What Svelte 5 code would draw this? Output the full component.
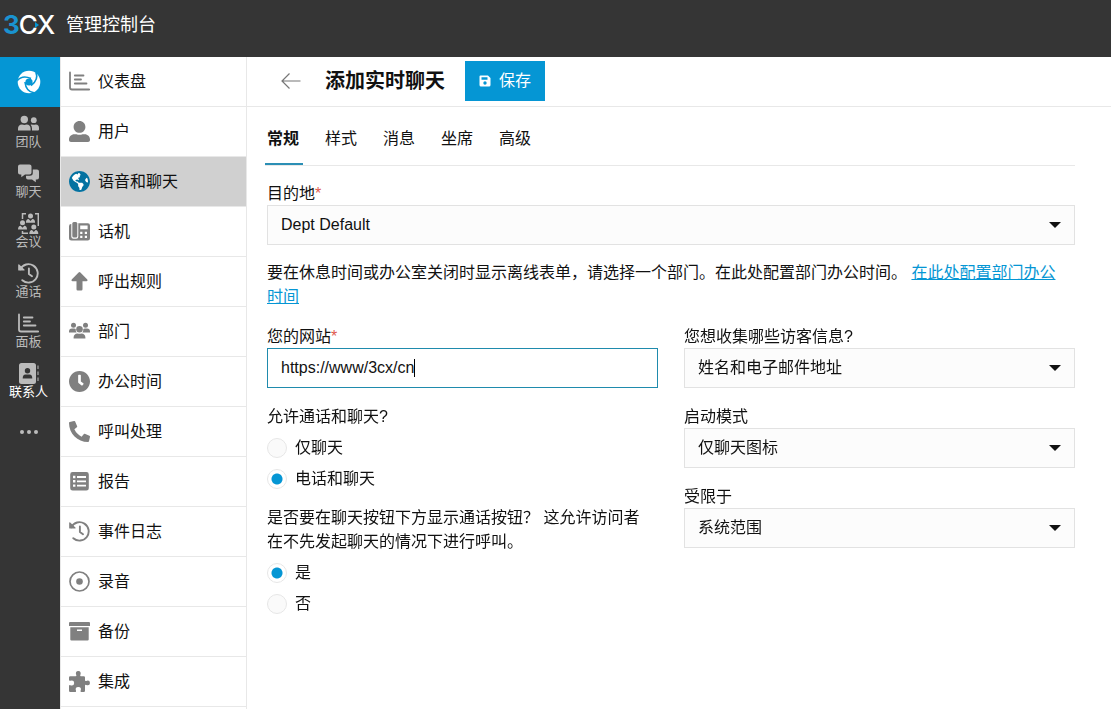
<script lang="ts">
  const rail = [
    { label: '团队', icon: 'team' },
    { label: '聊天', icon: 'chat' },
    { label: '会议', icon: 'meeting' },
    { label: '通话', icon: 'history' },
    { label: '面板', icon: 'chart' },
    { label: '联系人', icon: 'contacts', current: true }
  ];

  const menu = [
    { label: '仪表盘', icon: 'chart' },
    { label: '用户', icon: 'user' },
    { label: '语音和聊天', icon: 'globe', current: true },
    { label: '话机', icon: 'phones' },
    { label: '呼出规则', icon: 'arrowUp' },
    { label: '部门', icon: 'group' },
    { label: '办公时间', icon: 'clock' },
    { label: '呼叫处理', icon: 'phone' },
    { label: '报告', icon: 'report' },
    { label: '事件日志', icon: 'history' },
    { label: '录音', icon: 'record' },
    { label: '备份', icon: 'archive' },
    { label: '集成', icon: 'puzzle' }
  ];

  const tabs = ['常规', '样式', '消息', '坐席', '高级'];
  let activeTab = $state('常规');
  let website = $state('https://www/3cx/cn');
  let channel = $state('both');
  let callButton = $state('yes');

  function focusOnMount(node: HTMLInputElement) {
    node.focus();
    node.setSelectionRange(node.value.length, node.value.length);
  }
</script>

{#snippet icon(name: string)}
  {#if name === 'chart'}
    <svg class="icon" viewBox="0 0 21 21" fill="none" stroke="currentColor" stroke-width="1.8" stroke-linecap="round" stroke-linejoin="round">
      <path d="M1 1.500V16.500q0 2 2 2H20.200M5.800 4.500H14.500M5.800 8.500H12M5.800 12.500H17.500" />
    </svg>
  {:else if name === 'user'}
    <svg class="icon" viewBox="0 0 512 512" fill="currentColor">
      <path d="M256 288c79.500 0 144-64.500 144-144S335.500 0 256 0 112 64.500 112 144s64.500 144 144 144zm128 32h-55.100c-22.200 10.200-46.900 16-72.900 16s-50.600-5.800-72.900-16H128C57.300 320 0 377.300 0 448v16c0 26.500 21.500 48 48 48h416c26.500 0 48-21.500 48-48v-16c0-70.700-57.300-128-128-128z" />
    </svg>
  {:else if name === 'globe'}
    <svg class="icon" viewBox="0 8 496 496" fill="currentColor">
      <circle cx="248" cy="256" r="240" fill="#fff" />
      <path d="M248 8C111.030 8 0 119.030 0 256s111.030 248 248 248 248-111.030 248-248S384.970 8 248 8zm82.290 357.600c-3.900 3.880-7.990 7.950-11.310 11.280-2.990 3-5.100 6.700-6.170 10.710-1.510 5.660-2.730 11.380-4.770 16.870l-17.390 46.850c-13.760 3-28 4.690-42.650 4.690v-27.380c1.690-12.620-7.640-36.260-22.630-51.250-6-6-9.370-14.140-9.370-22.630v-32.010c0-11.640-6.270-22.340-16.460-27.970-14.370-7.950-34.810-19.060-48.810-26.110-11.480-5.780-22.100-13.140-31.650-21.750l-.8-.72a114.792 114.792 0 0 1-18.060-20.740c-9.380-13.770-24.660-36.420-34.590-51.140 20.470-45.500 57.360-82.040 103.200-101.890l24.010 12.010C203.480 89.740 216 82.010 216 70.110v-11.300c7.990-1.290 16.120-2.110 24.390-2.420l28.300 28.300c6.250 6.250 6.250 16.380 0 22.630L264 112l-10.340 10.340c-3.120 3.120-3.120 8.190 0 11.310l4.690 4.690c3.120 3.120 3.120 8.190 0 11.310l-8 8a8.008 8.008 0 0 1-5.660 2.340h-8.990c-2.080 0-4.080.81-5.580 2.270l-9.920 9.650a8.008 8.008 0 0 0-1.580 9.310l15.590 31.190c2.660 5.320-1.210 11.580-7.150 11.580h-5.640c-1.930 0-3.790-.7-5.240-1.960l-9.280-8.060a16.017 16.017 0 0 0-15.550-3.100l-31.170 10.390a11.950 11.950 0 0 0-8.170 11.340c0 4.530 2.560 8.660 6.610 10.690l11.080 5.540c9.410 4.710 19.790 7.160 30.310 7.160s22.590 27.290 32 32h66.750c8.490 0 16.620 3.370 22.630 9.370l13.690 13.690a30.503 30.503 0 0 1 8.930 21.570 46.536 46.536 0 0 1-13.720 32.980zM417 274.250c-5.790-1.450-10.840-5-14.150-9.970l-17.980-26.970a23.970 23.970 0 0 1 0-26.620l19.590-29.380c2.320-3.470 5.500-6.290 9.240-8.150l12.980-6.490C440.200 193.590 448 223.870 448 256c0 8.670-.74 17.160-1.820 25.540L417 274.250z" />
    </svg>
  {:else if name === 'phones'}
    <svg class="icon" viewBox="0 0 21 21" fill="currentColor" fill-rule="evenodd">
      <rect x="3.300" y="1" width="5" height="15.500" rx="1.500" />
      <path d="M2.300 3A2.200 2.200 0 0 0 0 5.200V17a2.500 2.500 0 0 0 2.500 2.500H18.800A2.200 2.200 0 0 0 21 17.300V4.500A2.200 2.200 0 0 0 18.800 2.300H9.300V15.500A2.200 2.200 0 0 1 7.100 17.700H4.500A2.200 2.200 0 0 1 2.300 15.500ZM11.200 4.500H18.600V8.300H11.200ZM11.200 10.700H13.400V12.900H11.200ZM15.800 10.700H18V12.900H15.800ZM11.200 14.800H13.400V17H11.200ZM15.800 14.800H18V17H15.800Z" />
    </svg>
  {:else if name === 'arrowUp'}
    <svg class="icon" viewBox="0 0 21 21" fill="currentColor">
      <path d="M9.600 1.500Q10.500.7 11.400 1.500L18.300 8.400Q19.200 10 17.500 10.200H13.500V18.300Q13.500 19.500 12.300 19.500H8.700Q7.500 19.500 7.500 18.300V10.200H3.500Q1.800 10 2.700 8.400Z" />
    </svg>
  {:else if name === 'group'}
    <svg class="icon" viewBox="0 0 21 21" fill="currentColor">
      <circle cx="4.500" cy="4.200" r="2.500" /><circle cx="16.500" cy="4.200" r="2.500" /><circle cx="10.500" cy="8.300" r="3.300" />
      <path d="M0 11.500V10.500A3 3 0 0 1 3 7.500H5.200Q6.200 7.500 6.700 8 6.500 10 7.600 11.500ZM21 11.500V10.500A3 3 0 0 0 18 7.500H15.800Q14.800 7.500 14.300 8 14.500 10 13.400 11.500ZM4.600 17.500V16.500A4.200 4.200 0 0 1 8.500 12.500Q10.500 13.200 12.500 12.500A4.200 4.200 0 0 1 16.400 16.500V17.500Z" />
    </svg>
  {:else if name === 'clock'}
    <svg class="icon" viewBox="8 8 496 496" fill="currentColor">
      <path d="M256,8C119,8,8,119,8,256S119,504,256,504,504,393,504,256,393,8,256,8Zm92.490,313h0l-20,25a16,16,0,0,1-22.490,2.500h0l-67-49.720a40,40,0,0,1-15-31.230V112a16,16,0,0,1,16-16h32a16,16,0,0,1,16,16V256l58,42.500A16,16,0,0,1,348.490,321Z" />
    </svg>
  {:else if name === 'phone'}
    <svg class="icon" viewBox="0 0 512 512" fill="currentColor">
      <path d="M497.390 361.800l-112-48a24 24 0 0 0-28 6.900l-49.600 60.600A370.660 370.660 0 0 1 130.600 204.110l60.600-49.600a23.940 23.940 0 0 0 6.900-28l-48-112A24.160 24.160 0 0 0 122.600.61l-104 24A24 24 0 0 0 0 48c0 256.500 207.900 464 464 464a24 24 0 0 0 23.400-18.600l24-104a24.290 24.290 0 0 0-14.010-27.600z" />
    </svg>
  {:else if name === 'report'}
    <svg class="icon" viewBox="0 0 21 21" fill="currentColor" fill-rule="evenodd">
      <path d="M3.600 1H17.400A2.400 2.400 0 0 1 19.800 3.400V17.200A2.400 2.400 0 0 1 17.400 19.600H3.600A2.400 2.400 0 0 1 1.200 17.200V3.400A2.400 2.400 0 0 1 3.600 1ZM4 4.800V7.200H6.400V4.800ZM8 5.100V6.900H17V5.100ZM4 9.100V11.500H6.400V9.100ZM8 9.400V11.200H17V9.400ZM4 13.400V15.800H6.400V13.400ZM8 13.700V15.500H17V13.700Z" />
    </svg>
  {:else if name === 'history'}
    <svg class="icon" viewBox="0 0 21 21" fill="none" stroke="currentColor" stroke-width="1.900" stroke-linecap="round" stroke-linejoin="round">
      <path d="M2.300 6.200A9.200 9.200 0 1 1 4.300 17.200M10.900 5.500V11L14 13.300" />
      <path d="M.8 1.800V7H6Z" fill="currentColor" stroke-width="1.200" />
    </svg>
  {:else if name === 'record'}
    <svg class="icon" viewBox="0 0 21 21" fill="none" stroke="currentColor" stroke-width="1.700">
      <circle cx="10.500" cy="10.500" r="9.500" /><circle cx="10.500" cy="10.500" r="3.300" fill="currentColor" stroke="none" />
    </svg>
  {:else if name === 'archive'}
    <svg class="icon" viewBox="0 0 21 21" fill="currentColor" fill-rule="evenodd">
      <path d="M1 1H20Q21 1 21 2V5H0V2Q0 1 1 1ZM1.300 6.300H19.700V18.500Q19.700 19.600 18.600 19.600H2.400Q1.300 19.600 1.300 18.500ZM8 8.500V10H13V8.500Z" />
    </svg>
  {:else if name === 'puzzle'}
    <svg class="icon" viewBox="0 0 21 21" fill="currentColor">
      <path d="M0 6.500Q0 5.300 1.200 5.300H6.500Q7.800 5.300 7.300 4.200 5.800.2 9.300 0 12.700.2 11.300 4.200 10.800 5.300 12 5.300H14.800Q16 5.300 16 6.500V9Q16 10.500 17.200 9.900 20.800 8.700 21 11.900 20.800 15.200 17.200 13.900 16 13.400 16 14.800V19.800Q16 21 14.800 21H12.300Q11.200 21 11.600 19.700 13 16.300 9.300 16 5.700 16.300 7 19.700 7.400 21 6.300 21H1.200Q0 21 0 19.800V15.200Q0 13.700 1.300 14.200 5 15.300 5.200 11.900 5 8.700 1.300 9.700 0 10.200 0 8.800Z" />
    </svg>
  {:else if name === 'team'}
    <svg class="icon" viewBox="0 0 21 21" fill="currentColor">
      <circle cx="6.300" cy="6.500" r="3.700" /><circle cx="15.800" cy="7.200" r="2.900" />
      <path d="M0 17.500V15.800A4.300 4.300 0 0 1 4 11.500Q6.300 12.300 8.600 11.500A4.300 4.300 0 0 1 12.600 15.800V17.500ZM14 17.500V15.500Q13.900 13 12.600 11.800L13.800 11.400Q15.800 12.100 17.800 11.400A3.600 3.600 0 0 1 21 15V16.500Q21 17.500 20 17.500Z" />
    </svg>
  {:else if name === 'chat'}
    <svg class="icon" viewBox="0 0 21 21" fill="currentColor">
      <path d="M2 1.500H11.500A2 2 0 0 1 13.500 3.500V9.500A2 2 0 0 1 11.500 11.500H7L3.300 14.300V11.500H2A2 2 0 0 1 0 9.500V3.500A2 2 0 0 1 2 1.500Z" />
      <path d="M14.800 6.500H19A2 2 0 0 1 21 8.500V14.500A2 2 0 0 1 19 16.500H17.800V19.300L14 16.500H10A2 2 0 0 1 8 14.500V12.800H12A2.800 2.800 0 0 0 14.800 10Z" />
    </svg>
  {:else if name === 'meeting'}
    <svg class="icon" viewBox="0 0 21 21" fill="currentColor">
      <path d="M4.500 6V.8H8M17 .8H20.300V13M4.500 18V20.300H10" fill="none" stroke="currentColor" stroke-width="1.500" />
      <circle cx="12.500" cy="3" r="2.500" /><circle cx="4.500" cy="9.800" r="2.500" /><circle cx="15.800" cy="14" r="2.500" />
      <path d="M7.900 9.700Q7.900 6.200 10.600 6L12.500 8 14.400 6Q17.100 6.200 17.100 9.700ZM0 16.500Q0 13 2.700 12.800L4.500 14.700 6.300 12.800Q9 13 9 16.500ZM11.300 21Q11.300 17.300 14 17L15.800 18.900 17.600 17Q20.300 17.300 20.300 21Z" />
    </svg>
  {:else if name === 'contacts'}
    <svg class="icon" viewBox="0 0 21 21" fill="currentColor" fill-rule="evenodd">
      <path d="M3.500 0H15.500A2.500 2.500 0 0 1 18 2.500V18.500A2.500 2.500 0 0 1 15.500 21H3.500A2.500 2.500 0 0 1 1 18.500V2.500A2.500 2.500 0 0 1 3.500 0ZM9.500 5A2.700 2.700 0 1 0 9.500 10.400 2.700 2.700 0 1 0 9.500 5ZM4.700 15.500H14.300Q14.300 11.500 11.500 11.500H7.500Q4.700 11.500 4.700 15.500Z" />
      <path d="M19.500 2.500H20.500V6H19.500ZM19.500 8.500H20.500V12H19.500ZM19.500 14.500H20.500V18H19.500Z" />
    </svg>
  {/if}
{/snippet}

{#snippet dropdown(id: string, value: string)}
  <div class="dropdown">
    <select {id} class="control">
      <option>{value}</option>
    </select>
    <svg class="arrow" viewBox="0 0 12 6"><path d="M0 0H12L6 6Z" fill="#111" /></svg>
  </div>
{/snippet}

<div class="page" lang="zh-CN">
  <header class="topbar">
    <div class="logo">
      <span class="three">3</span><span>C</span><svg class="wedge" viewBox="0 0 4 6"><path d="M0 0L4 3L0 6Z" fill="#0596d4" /></svg><span>X</span>
    </div>
    <span class="product">管理控制台</span>
  </header>

  <div class="body">
    <nav class="rail" aria-label="应用">
      <a class="brand" href="#admin" aria-label="管理">
        <svg viewBox="0 0 24 24" fill="none" stroke="#0596d4" stroke-width="1.600">
          <circle cx="12" cy="12" r="11.300" fill="#fff" stroke="none" />
          <circle cx="12" cy="12" r="3.600" fill="#0596d4" stroke="none" />
          <path d="M0 11Q5 4.500 14 8.500" />
          <path d="M0 11Q5 4.500 14 8.500" transform="rotate(120 12 12)" />
          <path d="M0 11Q5 4.500 14 8.500" transform="rotate(240 12 12)" />
        </svg>
      </a>
      {#each rail as item}
        <a class="app" class:current={item.current} href="#{item.icon}">
          {@render icon(item.icon)}
          <span>{item.label}</span>
        </a>
      {/each}
      <button class="more" aria-label="更多"><i></i><i></i><i></i></button>
    </nav>

    <nav class="menu" aria-label="管理菜单">
      {#each menu as item}
        <a class:current={item.current} href="#{item.icon}">
          {@render icon(item.icon)}
          <span>{item.label}</span>
        </a>
      {/each}
    </nav>

    <main>
      <div class="titlebar">
        <button class="back" aria-label="返回">
          <svg viewBox="0 0 20 16" fill="none" stroke="#777" stroke-width="1.200"><path d="M19.500 8H1M8.500 .5L1 8L8.500 15.500" /></svg>
        </button>
        <h1>添加实时聊天</h1>
        <button class="save">
          <svg viewBox="0 0 12 12" fill="#fff" fill-rule="evenodd">
            <path d="M1.500 .5H9L11.500 3V10A1.500 1.500 0 0 1 10 11.500H2A1.500 1.500 0 0 1 .5 10V1.500A1 1 0 0 1 1.500 .5ZM2.500 2.300V4.700H8.500V2.300ZM6 6.300A1.700 1.700 0 1 0 6 9.700 1.700 1.700 0 1 0 6 6.300Z" />
          </svg>
          <span>保存</span>
        </button>
      </div>

      <form class="form" onsubmit={(e) => e.preventDefault()}>
        <div class="tabs" role="tablist">
          {#each tabs as tab}
            <button type="button" role="tab" aria-selected={activeTab === tab} class:active={activeTab === tab} onclick={() => (activeTab = tab)}>{tab}</button>
          {/each}
        </div>

        <div class="field">
          <label for="destination">目的地<span class="required">*</span></label>
          {@render dropdown('destination', 'Dept Default')}
        </div>

        <p class="note">要在休息时间或办公室关闭时显示离线表单，请选择一个部门。在此处配置部门办公时间。 <a href="#hours">在此处配置部门办公时间</a></p>

        <div class="columns">
          <div class="column">
            <div class="field">
              <label for="website">您的网站<span class="required">*</span></label>
              <div class="control textbox">
                <input id="website" type="text" bind:value={website} use:focusOnMount />
                <i class="cursor"></i>
              </div>
            </div>
            <fieldset>
              <legend>允许通话和聊天?</legend>
              <label class="choice"><input type="radio" name="channel" value="chat" bind:group={channel} />仅聊天</label>
              <label class="choice"><input type="radio" name="channel" value="both" bind:group={channel} />电话和聊天</label>
            </fieldset>
            <fieldset>
              <legend class="note">是否要在聊天按钮下方显示通话按钮？ 这允许访问者在不先发起聊天的情况下进行呼叫。</legend>
              <label class="choice"><input type="radio" name="callButton" value="yes" bind:group={callButton} />是</label>
              <label class="choice"><input type="radio" name="callButton" value="no" bind:group={callButton} />否</label>
            </fieldset>
          </div>
          <div class="column">
            <div class="field">
              <label for="visitor">您想收集哪些访客信息?</label>
              {@render dropdown('visitor', '姓名和电子邮件地址')}
            </div>
            <div class="field">
              <label for="mode">启动模式</label>
              {@render dropdown('mode', '仅聊天图标')}
            </div>
            <div class="field">
              <label for="scope">受限于</label>
              {@render dropdown('scope', '系统范围')}
            </div>
          </div>
        </div>
      </form>
    </main>
  </div>
</div>

<style>
  :global(body) {
    background: #fff;
  }

  .page {
    display: flex;
    flex-direction: column;
    height: 100vh;
    overflow: hidden;
    color: #111;
    font: 16px/24px 'Liberation Sans', 'Noto Sans CJK SC', sans-serif;
  }

  .page :global(*) {
    box-sizing: border-box;
  }

  a {
    color: inherit;
    text-decoration: none;
  }

  button,
  input,
  select {
    margin: 0;
    font: inherit;
    color: inherit;
  }

  button {
    padding: 0;
    border: 0;
    background: none;
    cursor: pointer;
  }

  .icon {
    flex: none;
    width: 21px;
    height: 21px;
  }

  .topbar {
    display: flex;
    flex: none;
    align-items: center;
    gap: 12px;
    height: 57px;
    padding: 0 3px 7px;
    background: #353535;
    color: #fff;
  }

  .logo {
    display: flex;
    align-items: center;
    width: 51px;
    font: 500 26px/30px Inter, sans-serif;
  }

  .three {
    color: #1a93d0;
    font-weight: 700;
  }

  .logo span {
    margin-right: -1px;
  }

  .wedge {
    flex: none;
    width: 4px;
    height: 6px;
    margin: 0 -2px;
  }

  .product {
    font-size: 18px;
  }

  .body {
    display: flex;
    flex: 1;
    min-height: 0;
  }

  .rail {
    flex: none;
    width: 60px;
    background: #353535;
    color: #bbb;
    font-size: 13px;
    line-height: 16px;
  }

  .brand,
  .app,
  .more {
    display: flex;
    align-items: center;
    width: 100%;
    height: 50px;
    padding-right: 3px;
  }

  .brand {
    justify-content: center;
    background: #0596d4;
  }

  .brand svg {
    width: 24px;
    height: 24px;
  }

  .app {
    flex-direction: column;
    padding-top: 6px;
  }

  .app.current span {
    color: #fff;
  }

  .more {
    justify-content: center;
    gap: 3px;
  }

  .more i {
    width: 4px;
    height: 4px;
    border-radius: 50%;
    background: #bbb;
  }

  .menu {
    flex: none;
    width: 187px;
    overflow: hidden;
    border: solid #e8e8e8;
    border-width: 0 1px;
  }

  .menu a {
    display: flex;
    align-items: center;
    gap: 8px;
    height: 50px;
    padding: 0 8px;
    border-bottom: 1px solid #e8e8e8;
  }

  .menu .icon {
    color: #808080;
  }

  .menu .current {
    background: #d0d0d0;
  }

  .menu .current .icon {
    color: #0472a1;
  }

  main {
    flex: 1;
    min-width: 0;
  }

  .titlebar {
    display: flex;
    align-items: center;
    height: 50px;
    padding: 0 36px 1px 34px;
    border-bottom: 1px solid #e8e8e8;
  }

  .back {
    display: flex;
    margin-right: 24px;
  }

  .back svg {
    width: 20px;
    height: 16px;
  }

  h1 {
    margin: 0 20px 0 0;
    font-size: 20px;
    line-height: 24px;
  }

  .save {
    display: flex;
    align-items: center;
    gap: 8px;
    height: 40px;
    padding: 0 14px;
    background: #0596d4;
    color: #fff;
  }

  .save svg {
    width: 12px;
    height: 12px;
  }

  .form {
    padding: 8px 36px 20px 20px;
  }

  .tabs {
    display: flex;
    gap: 20px;
    height: 51px;
    margin: 0 0 16px -2px;
    border-bottom: 1px solid #e8e8e8;
  }

  .tabs button {
    padding: 0 4px 0 2px;
    border-bottom: 2px solid transparent;
  }

  .tabs .active {
    border-color: #2b8fb5;
    font-weight: bold;
  }

  .field {
    display: flex;
    flex-direction: column;
  }

  .field > label {
    margin-bottom: -1px;
  }

  .required {
    color: #e05a4e;
  }

  .control {
    width: 100%;
    height: 40px;
    padding: 0 13px;
    border: 1px solid #e2e2e2;
    border-radius: 0;
    outline: none;
    background: #fcfcfc;
    appearance: none;
  }

  .control:focus,
  .textbox:focus-within {
    border-color: #1f8bad;
    background: #fff;
  }

  .textbox {
    display: flex;
    align-items: center;
  }

  .textbox input {
    min-width: 0;
    max-width: 100%;
    padding: 0;
    border: 0;
    outline: none;
    background: none;
    caret-color: transparent;
    field-sizing: content;
  }

  .cursor {
    flex: none;
    width: 1px;
    height: 18px;
    background: #000;
    visibility: hidden;
  }

  .textbox:focus-within .cursor {
    visibility: visible;
  }

  .dropdown {
    display: grid;
    align-items: center;
  }

  .dropdown > :global(*) {
    grid-area: 1 / 1;
  }

  .arrow {
    justify-self: end;
    width: 12px;
    height: 6px;
    margin-right: 14px;
    pointer-events: none;
  }

  .note {
    padding: 0 8px 0 0;
  }

  p.note {
    margin: 16px 0;
  }

  .note a {
    color: #0596d4;
    text-decoration: underline;
  }

  .columns {
    display: grid;
    grid-template-columns: 1fr 1fr;
    gap: 26px;
  }

  .column {
    display: flex;
    flex-direction: column;
    gap: 17px;
  }

  fieldset {
    min-width: 0;
    margin: 0 0 -5px;
    padding: 0;
    border: 0;
  }

  legend {
    margin-bottom: 3px;
    padding: 0;
  }

  .choice {
    display: flex;
    align-items: center;
    gap: 8px;
    height: 31px;
  }

  .choice input {
    width: 20px;
    height: 20px;
    border: 1px solid #e6e6e6;
    border-radius: 50%;
    background: #fafafa;
    appearance: none;
  }

  .choice input:checked {
    background: radial-gradient(circle, #0596d4 5px, #fff 6px);
  }
</style>
